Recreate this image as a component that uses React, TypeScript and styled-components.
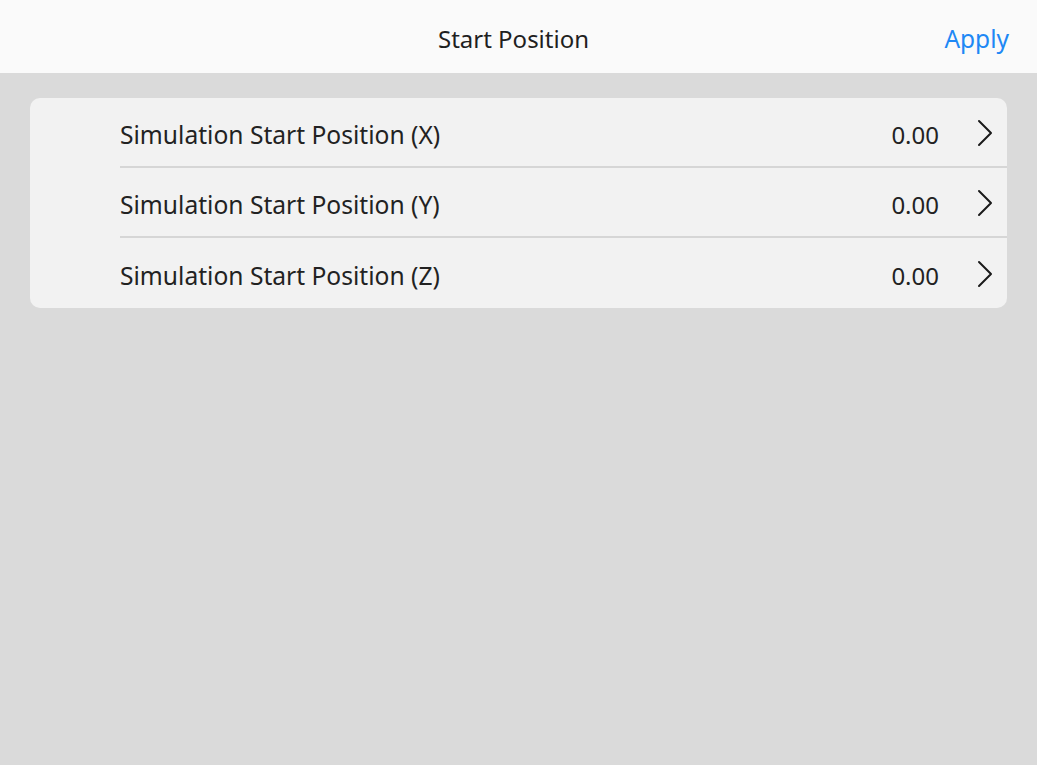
import styled, { createGlobalStyle } from 'styled-components';

const rows = [
  { id: 'x', label: 'Simulation Start Position (X)', value: '0.00' },
  { id: 'y', label: 'Simulation Start Position (Y)', value: '0.00' },
  { id: 'z', label: 'Simulation Start Position (Z)', value: '0.00' },
];

const ChevronIcon = () => (
  <svg viewBox="0 0 18 28" width="18" height="28" fill="none">
    <path d="M3 2 L15 14 L3 26" stroke="#1a1a1a" strokeWidth="2" strokeLinecap="round" strokeLinejoin="round" />
  </svg>
);

const App = () => {
  return (
    <Container>
      <GlobalStyle />
      <Header>
        <Spacer />
        <Title>Start Position</Title>
        <ApplyButton>Apply</ApplyButton>
      </Header>

      <Main>
        <Card>
          {rows.map((row, i) => (
            <Row key={row.id} $last={i === rows.length - 1}>
              <Label>{row.label}</Label>
              <Value>{row.value}</Value>
              <Chevron>
                <ChevronIcon />
              </Chevron>
            </Row>
          ))}
        </Card>
      </Main>
    </Container>
  );
};

const GlobalStyle = createGlobalStyle`
  html,
  body {
    margin: 0;
    padding: 0;
    background-color: #dadada;
  }

  * {
    box-sizing: border-box;
  }
`;

const Container = styled.div`
  min-height: 100vh;
  background-color: #dadada;
  color: #222;
  font-family: 'Noto Sans', 'Open Sans', sans-serif;
`;

const Header = styled.header`
  height: 73px;
  background-color: #fafafa;
  display: grid;
  grid-template-columns: 1fr auto 1fr;
  align-items: center;
  padding: 4px 28px 0 18px;
`;

const Spacer = styled.div``;

const Title = styled.h1`
  margin: 0;
  font-size: 24px;
  font-weight: 400;
  color: #1f1f1f;
`;

const ApplyButton = styled.button`
  justify-self: end;
  background: transparent;
  border: none;
  padding: 0;
  font-family: inherit;
  font-size: 24.5px;
  color: #1e88f5;
  cursor: pointer;
`;

const Main = styled.main`
  padding: 25px 30px;
`;

const Card = styled.section`
  background-color: #f2f2f2;
  border-radius: 10px;
  padding-left: 90px;
  overflow: hidden;
`;

const Row = styled.div<{ $last?: boolean }>`
  height: 70px;
  display: flex;
  align-items: center;
  padding-top: 4px;
  border-bottom: ${({ $last }) => ($last ? 'none' : '2px solid #d6d6d6')};
`;

const Label = styled.span`
  flex: 1;
  font-size: 24.6px;
  color: #222;
`;

const Value = styled.span`
  font-size: 24px;
  color: #222;
`;

const Chevron = styled.span`
  display: flex;
  align-items: center;
  margin-top: -3px;
  margin-left: 37px;
  margin-right: 13px;
`;

export default App;
